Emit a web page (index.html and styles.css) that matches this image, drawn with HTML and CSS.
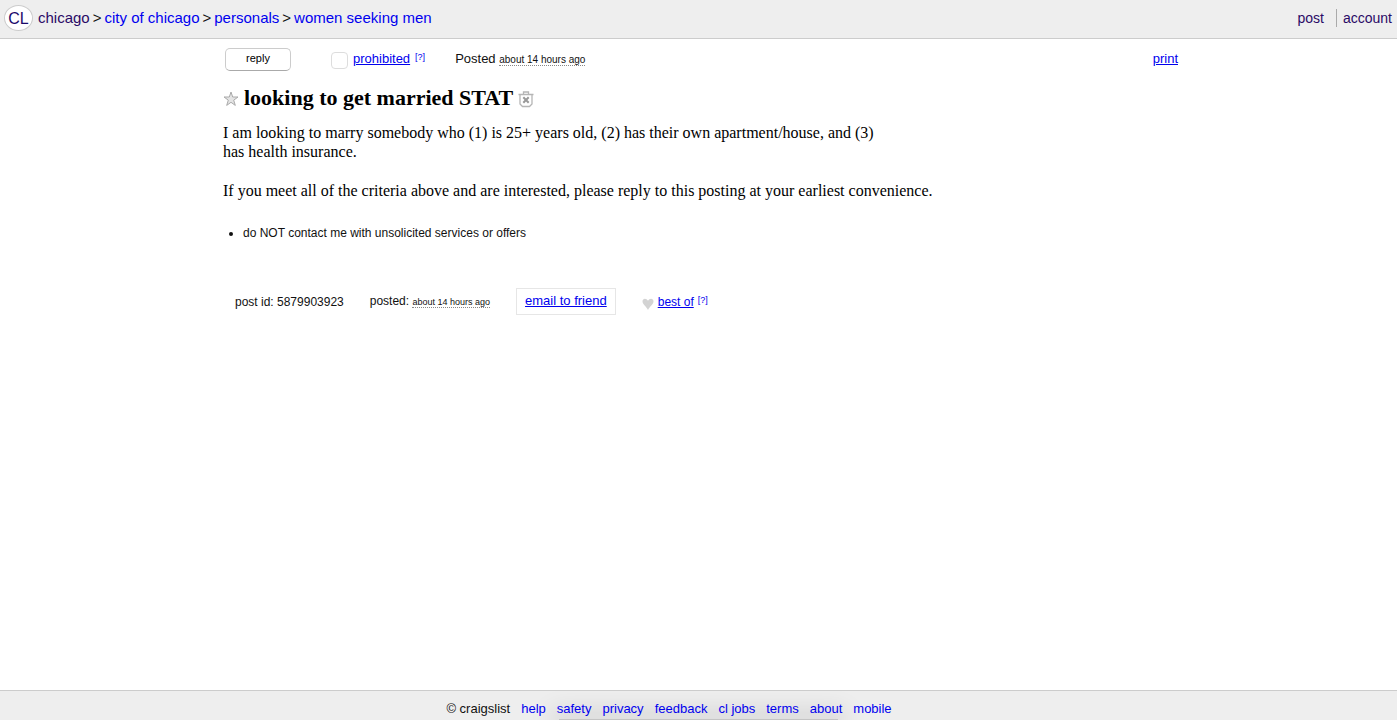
FILE: index.html
```html
<!DOCTYPE html>
<html lang="en">
<head>
<meta charset="utf-8">
<title>looking to get married STAT - women seeking men</title>
<link rel="stylesheet" href="styles.css">
</head>
<body>
<header class="topbar">
  <nav class="crumbs" aria-label="breadcrumbs">
    <a class="logo" href="#">CL</a>
    <a class="visited" href="#">chicago</a>
    <span>&gt;</span>
    <a href="#">city of chicago</a>
    <span>&gt;</span>
    <a href="#">personals</a>
    <span>&gt;</span>
    <a href="#">women seeking men</a>
  </nav>
  <nav class="user-links" aria-label="account">
    <a href="#">post</a>
    <a class="account" href="#">account</a>
  </nav>
</header>
<main class="posting">
  <div class="actions">
    <button class="reply" type="button">reply</button>
    <div class="flag">
      <input class="flag-box" type="checkbox" id="prohibited" aria-labelledby="prohibited-link">
      <a id="prohibited-link" href="#">prohibited</a>
      <a class="hint" href="#">[?]</a>
    </div>
    <p class="posted">Posted <time class="ago">about 14 hours ago</time></p>
    <a class="print" href="#">print</a>
  </div>
  <h1 class="title">
    <button class="icon-button" type="button" aria-label="save">
      <svg width="16" height="16" viewBox="0 0 16 16"><path d="M8 1 9.700 6H15l-4.300 3.200L12.300 14.400 8 11.300l-4.300 3.100L5.300 9.200 1 6h5.300z" fill="#e4e4e4" stroke="#aaa" stroke-width="1"/></svg>
    </button>
    <span>looking to get married STAT</span>
    <button class="icon-button" type="button" aria-label="hide">
      <svg width="16" height="17" viewBox="0 0 16 17" fill="none" stroke="#b5b5b5" stroke-width="1.300"><path d="M.5 3.500h15M5.500 3V1h5v2M2 3.500v9.500l2.500 2.500h7L14 13V3.500"/><path d="m5.300 6.200 5.400 5.600m0-5.600-5.400 5.600" stroke="#999" stroke-width="2"/></svg>
    </button>
  </h1>
  <section class="body">
    <p class="intro">I am looking to marry somebody who (1) is 25+ years old, (2) has their own apartment/house, and (3) has health insurance.</p>
    <p>If you meet all of the criteria above and are interested, please reply to this posting at your earliest convenience.</p>
  </section>
  <ul class="notices">
    <li>do NOT contact me with unsolicited services or offers</li>
  </ul>
  <div class="post-info">
    <p>post id: 5879903923</p>
    <p>posted: <time class="ago small">about 14 hours ago</time></p>
    <a class="email" href="#">email to friend</a>
    <div class="best">
      <svg width="12" height="12" viewBox="0 0 12 12"><path d="M6 12C4.500 8.500.5 6.500.5 3.200.5.200 4.500-.3 6 2.800 7.500-.3 11.500.2 11.500 3.200 11.500 6.500 7.500 8.500 6 12z" fill="#d3d3d3"/></svg>
      <a href="#">best of</a>
      <a class="hint" href="#">[?]</a>
    </div>
  </div>
</main>
<footer class="footer">
  <span>© craigslist</span>
  <a href="#">help</a>
  <a href="#">safety</a>
  <a href="#">privacy</a>
  <a href="#">feedback</a>
  <a href="#">cl jobs</a>
  <a href="#">terms</a>
  <a href="#">about</a>
  <a href="#">mobile</a>
</footer>
</body>
</html>
```
FILE: styles.css
```css
* {
  box-sizing: border-box;
}

body {
  margin: 0;
  min-height: 100vh;
  display: flex;
  flex-direction: column;
  background: #fff;
  color: #111;
  font: 13px/18px "Liberation Sans", Arial, sans-serif;
}

p {
  margin: 0;
}

a {
  color: #00e;
}

.topbar {
  display: flex;
  justify-content: space-between;
  align-items: center;
  height: 39px;
  padding: 0 5px 3px 4px;
  background: #eee;
  border-bottom: 1px solid #ccc;
  font-size: 14px;
}

.topbar a {
  text-decoration: none;
}

.crumbs {
  display: flex;
  align-items: center;
  gap: 3px;
  font-size: 15px;
}

.topbar .logo {
  width: 29px;
  height: 26px;
  margin-right: 2px;
  border: 1px solid #ccc;
  border-radius: 50%;
  background: #fff;
  color: #1b0a6b;
  font-size: 16px;
  line-height: 25px;
  text-align: center;
}

.topbar .visited,
.topbar .user-links a {
  color: #2a0a66;
}

.user-links {
  display: flex;
  align-items: center;
  gap: 12px;
}

.account {
  padding-left: 6px;
  border-left: 1px solid #aaa;
}

.posting {
  flex: 1;
  width: 100%;
  max-width: 959px;
  margin: 0 auto;
  padding: 8px 0 20px 4px;
}

.actions {
  display: flex;
  align-items: center;
  height: 24px;
}

.reply {
  width: 66px;
  height: 23px;
  margin: 0 40px 0 2px;
  padding: 0 0 2px;
  border: 1px solid #ccc;
  border-bottom-color: #aaa;
  border-radius: 5px;
  background: #fff;
  color: #000;
  font: 11px "Liberation Sans", Arial, sans-serif;
}

.flag {
  display: flex;
  align-items: center;
  gap: 5px;
}

.flag-box {
  appearance: none;
  width: 17px;
  height: 17px;
  margin: 2px 0 0;
  border: 1px solid #ddd;
  border-radius: 4px;
  background: #fff;
}

.hint {
  align-self: flex-start;
  font-size: 9px;
  line-height: 14px;
  text-decoration: none;
}

.posted {
  margin-left: 30px;
}

.ago {
  border-bottom: 1px dotted #888;
  font-size: 10px;
}

.ago.small {
  font-size: 9px;
}

.print {
  margin-left: auto;
}

.title {
  display: flex;
  align-items: center;
  gap: 5px;
  margin: 14px 0 0;
  font: bold 22px/26px "Liberation Serif", "Times New Roman", serif;
  color: #000;
}

.icon-button {
  display: flex;
  margin-top: 2px;
  padding: 0;
  border: 0;
  background: none;
}

.body {
  margin-top: 12px;
  color: #000;
  font: 16px/19px "Liberation Serif", "Times New Roman", serif;
}

.intro {
  max-width: 664px;
  margin-bottom: 20px;
}

.notices {
  margin: 24px 0 0;
  padding-left: 20px;
  font-size: 12px;
}

.post-info {
  display: flex;
  align-items: center;
  margin-top: 46px;
  padding-left: 12px;
  gap: 26px;
  font-size: 12px;
}

.email {
  padding: 3px 8px 4px;
  border: 1px solid #e6e6e6;
  font-size: 13px;
}

.best {
  display: flex;
  align-items: center;
  gap: 4px;
}

.best svg {
  margin-top: 4px;
}

.footer {
  position: relative;
  display: flex;
  justify-content: center;
  gap: 11px;
  height: 30px;
  padding: 9px 59px 0 0;
  border-top: 1px solid #ccc;
  background: #eee;
  overflow: hidden;
}

.footer span,
.footer a {
  position: relative;
  z-index: 1;
  text-decoration: none;
}

.footer::after {
  content: "";
  position: absolute;
  bottom: 0;
  left: 40%;
  right: 40%;
  height: 1px;
  background: #c4c4c4;
  box-shadow: 0 0 24px 8px rgba(0, 0, 0, 0.12);
}
```
